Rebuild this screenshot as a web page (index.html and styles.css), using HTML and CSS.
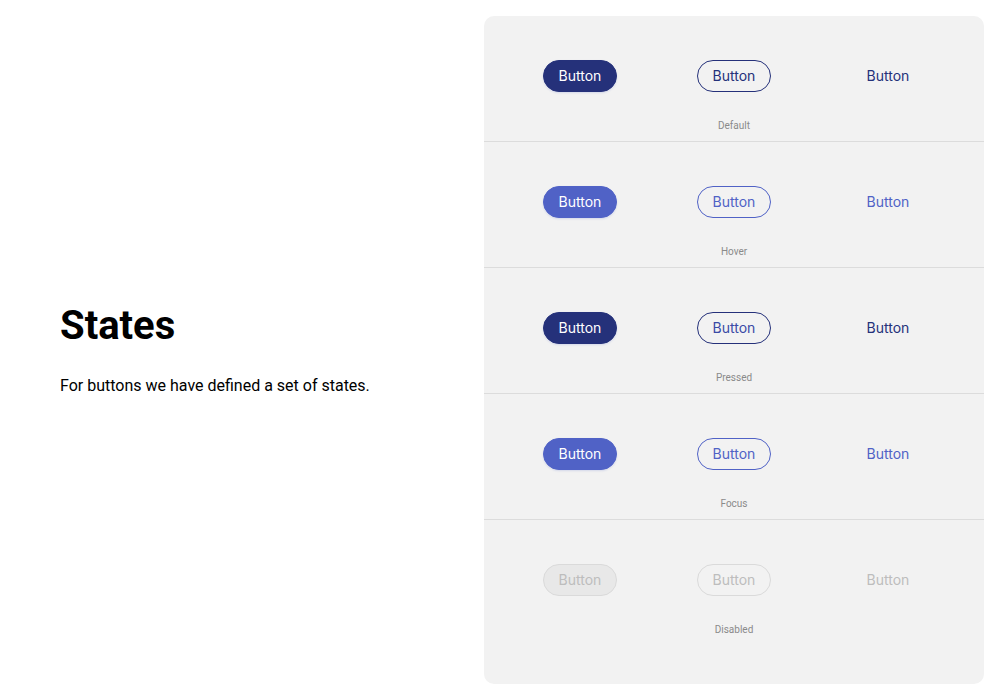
FILE: index.html
```html
<!DOCTYPE html>
<html>
<head>
<meta charset="utf-8">
<link rel="stylesheet" href="styles.css">
</head>
<body>
<div class="page">
  <div class="intro">
    <h1 class="title">States</h1>
    <p class="lead">For buttons we have defined a set of states.</p>
  </div>
  <div class="panel">
    <div class="state-row">
      <div class="buttons">
        <span class="btn btn-filled default">Button</span>
        <span class="btn btn-outline default">Button</span>
        <span class="btn btn-text default">Button</span>
      </div>
      <div class="state-label">Default</div>
    </div>
    <div class="state-row">
      <div class="buttons">
        <span class="btn btn-filled hover">Button</span>
        <span class="btn btn-outline hover">Button</span>
        <span class="btn btn-text hover">Button</span>
      </div>
      <div class="state-label">Hover</div>
    </div>
    <div class="state-row">
      <div class="buttons">
        <span class="btn btn-filled default">Button</span>
        <span class="btn btn-outline pressed">Button</span>
        <span class="btn btn-text default">Button</span>
      </div>
      <div class="state-label">Pressed</div>
    </div>
    <div class="state-row">
      <div class="buttons">
        <span class="btn btn-filled hover">Button</span>
        <span class="btn btn-outline hover">Button</span>
        <span class="btn btn-text hover">Button</span>
      </div>
      <div class="state-label">Focus</div>
    </div>
    <div class="state-row last">
      <div class="buttons">
        <span class="btn btn-filled disabled">Button</span>
        <span class="btn btn-outline disabled">Button</span>
        <span class="btn btn-text disabled">Button</span>
      </div>
      <div class="state-label">Disabled</div>
    </div>
  </div>
</div>
</body>
</html>
```

FILE: styles.css
```css
* { box-sizing: border-box; }
html, body { margin: 0; padding: 0; background: #ffffff; }
body { font-family: Roboto, "Liberation Sans", sans-serif; color: #000; }

.page {
  display: flex;
  align-items: center;
  padding: 16px 16px 16px 60px;
  height: 700px;
}
.intro { flex: 1; }
.title {
  margin: 0;
  font-size: 40px;
  font-weight: 700;
  line-height: 48px;
}
.lead {
  margin: 24px 0 0;
  font-size: 16px;
  line-height: 24px;
}

.panel {
  width: 500px;
  height: 668px;
  background: #f2f2f2;
  border-radius: 10px;
}
.state-row {
  height: 126px;
  border-bottom: 1px solid #dcdcdc;
  padding-top: 44px;
  display: flex;
  flex-direction: column;
  align-items: center;
}
.state-row.last { border-bottom: none; }
.buttons {
  display: grid;
  grid-template-columns: repeat(3, 154px);
  justify-items: center;
  align-items: center;
}
.btn {
  font-family: Inter, "Noto Sans", sans-serif;
  font-size: 14px;
  height: 32px;
  line-height: 30px;
  padding: 0 15px;
  border-radius: 16px;
  border: 1px solid transparent;
  display: inline-block;
}
.btn-filled.default { background: #25317a; border-color: #25317a; color: #ffffff; box-shadow: 0 1px 2px rgba(79, 99, 198, 0.18); }
.btn-filled.hover { background: #5062c6; border-color: #5062c6; color: #ffffff; box-shadow: 0 1px 2px rgba(79, 99, 198, 0.18); }
.btn-filled.disabled { background: #e8e8e8; border-color: #dadada; color: #bdbdbd; }
.btn-outline.default { border-color: #25317a; color: #25317a; }
.btn-outline.hover { border-color: #5062c6; color: #5062c6; }
.btn-outline.pressed { border-color: #25317a; color: #3a4aa6; }
.btn-outline.disabled { border-color: #dadada; color: #bdbdbd; }
.btn-text.default { color: #25317a; }
.btn-text.hover { color: #5062c6; }
.btn-text.disabled { color: #bdbdbd; }

.state-label {
  margin-top: 25px;
  font-size: 10px;
  line-height: 18px;
  color: #8a8a8a;
}
```
